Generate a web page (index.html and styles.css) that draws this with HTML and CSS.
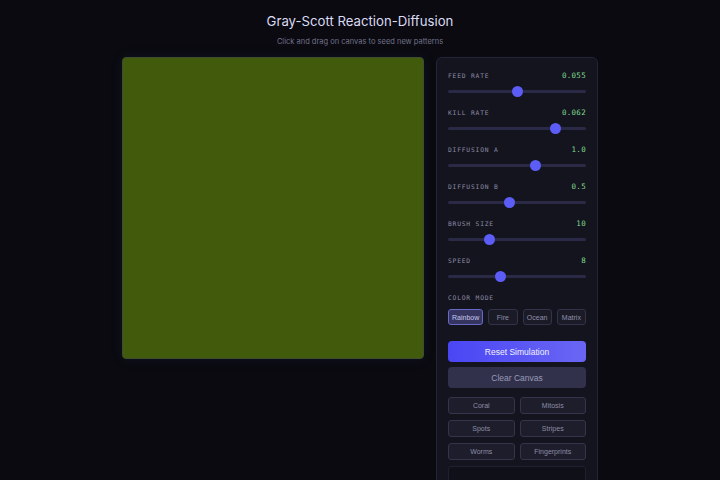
FILE: index.html
```html
<!DOCTYPE html>
<html lang="en">
<head>
    <meta charset="UTF-8">
    <meta name="viewport" content="width=device-width, initial-scale=1.0">
    <title>Gray-Scott Reaction-Diffusion</title>
    <link rel="stylesheet" href="styles.css">
</head>
<body>
    <header class="top">
        <h1>Gray-Scott Reaction-Diffusion</h1>
        <p class="hint">Click and drag on canvas to seed new patterns</p>
    </header>

    <main class="layout">
        <div class="sim" id="sim"></div>

        <aside class="panel">
            <div class="control">
                <div class="control-head"><span>Feed Rate</span><span class="val">0.055</span></div>
                <input type="range" min="0.01" max="0.1" step="0.001" value="0.055">
            </div>
            <div class="control">
                <div class="control-head"><span>Kill Rate</span><span class="val">0.062</span></div>
                <input type="range" min="0.03" max="0.07" step="0.001" value="0.062">
            </div>
            <div class="control">
                <div class="control-head"><span>Diffusion A</span><span class="val">1.0</span></div>
                <input type="range" min="0" max="1.55" step="0.05" value="1.0">
            </div>
            <div class="control">
                <div class="control-head"><span>Diffusion B</span><span class="val">0.5</span></div>
                <input type="range" min="0.1" max="1.0" step="0.05" value="0.5">
            </div>
            <div class="control">
                <div class="control-head"><span>Brush Size</span><span class="val">10</span></div>
                <input type="range" min="3" max="28" step="1" value="10">
            </div>
            <div class="control">
                <div class="control-head"><span>Speed</span><span class="val">8</span></div>
                <input type="range" min="1" max="20" step="1" value="8">
            </div>

            <div class="control-head mode-label"><span>Color Mode</span></div>
            <div class="modes">
                <button class="mode active">Rainbow</button>
                <button class="mode">Fire</button>
                <button class="mode">Ocean</button>
                <button class="mode">Matrix</button>
            </div>

            <button class="btn primary">Reset Simulation</button>
            <button class="btn secondary">Clear Canvas</button>

            <div class="presets">
                <button class="preset">Coral</button>
                <button class="preset">Mitosis</button>
                <button class="preset">Spots</button>
                <button class="preset">Stripes</button>
                <button class="preset">Worms</button>
                <button class="preset">Fingerprints</button>
            </div>

            <div class="stats"></div>
        </aside>
    </main>
</body>
</html>
```

FILE: styles.css
```css
* {
    box-sizing: border-box;
}
body {
    margin: 0;
    height: 100vh;
    background: #0a0a10;
    color: #d6d6ee;
    font-family: Inter, "Liberation Sans", sans-serif;
    overflow: hidden;
}
.top {
    text-align: center;
    padding-top: 12px;
}
h1 {
    margin: 0;
    font-size: 13.2px;
    line-height: 18px;
    font-weight: 400;
    color: #dadaf4;
}
.hint {
    margin: 6px 0 0;
    font-size: 7.5px;
    line-height: 12px;
    color: #72728c;
}
.layout {
    display: flex;
    justify-content: center;
    align-items: flex-start;
    gap: 12px;
    margin-top: 9px;
}
.sim {
    width: 302px;
    height: 302px;
    background: #415a0b;
    border: 1px solid #3f4d33;
    border-radius: 4px;
    box-shadow: 0 0 12px rgba(70, 70, 140, 0.15);
}
/* side panel runs on below the fold */
.panel {
    width: 162px;
    padding: 12px 11px 20px;
    background: #14141e;
    border: 1px solid #23233a;
    border-radius: 6px;
}
.control {
    margin-bottom: 10px;
}
.control-head {
    display: flex;
    justify-content: space-between;
    align-items: center;
    height: 10px;
    font-family: "DejaVu Sans Mono", monospace;
    font-size: 6.3px;
    letter-spacing: 0.8px;
    text-transform: uppercase;
    color: #8c8ca6;
}
.control-head .val {
    font-size: 7.5px;
    letter-spacing: 0.3px;
    color: #7fd98c;
}
input[type=range] {
    -webkit-appearance: none;
    appearance: none;
    display: block;
    width: 100%;
    height: 11px;
    margin: 6px 0 0;
    background: transparent;
}
input[type=range]::-webkit-slider-runnable-track {
    height: 3px;
    border-radius: 2px;
    background: #2a2a46;
}
input[type=range]::-webkit-slider-thumb {
    -webkit-appearance: none;
    width: 11px;
    height: 11px;
    margin-top: -4px;
    border-radius: 50%;
    background: #5c5cf6;
}
.mode-label {
    margin-top: 1px;
}
.modes {
    display: flex;
    gap: 5px;
    margin-top: 7px;
}
button {
    display: block;
    width: 100%;
    font-family: "Liberation Sans", Arial, sans-serif;
    cursor: pointer;
}
.mode {
    flex: 1 1 0;
    height: 16px;
    padding: 0 3px;
    font-size: 7px;
    color: #8f8fa8;
    background: #1b1b28;
    border: 1px solid #32324a;
    border-radius: 3px;
}
.mode.active {
    background: #35355f;
    border-color: #6868c8;
    color: #c8c8ee;
}
.btn {
    height: 21px;
    border: none;
    border-radius: 4px;
    font-size: 8.5px;
}
.primary {
    margin-top: 16px;
    background: linear-gradient(to right, #4a46f4, #6a66f4);
    color: #f2f2ff;
}
.secondary {
    margin-top: 5px;
    background: #31314b;
    color: #9a9ab8;
}
.presets {
    display: grid;
    grid-template-columns: 1fr 1fr;
    column-gap: 5px;
    row-gap: 6px;
    margin-top: 9px;
}
.preset {
    height: 17px;
    font-size: 7px;
    color: #8d8da6;
    background: #1d1d2b;
    border: 1px solid #34344a;
    border-radius: 3px;
}
.stats {
    margin-top: 6px;
    height: 40px;
    background: #101019;
    border: 1px solid #1f1f30;
    border-radius: 3px;
}
```
